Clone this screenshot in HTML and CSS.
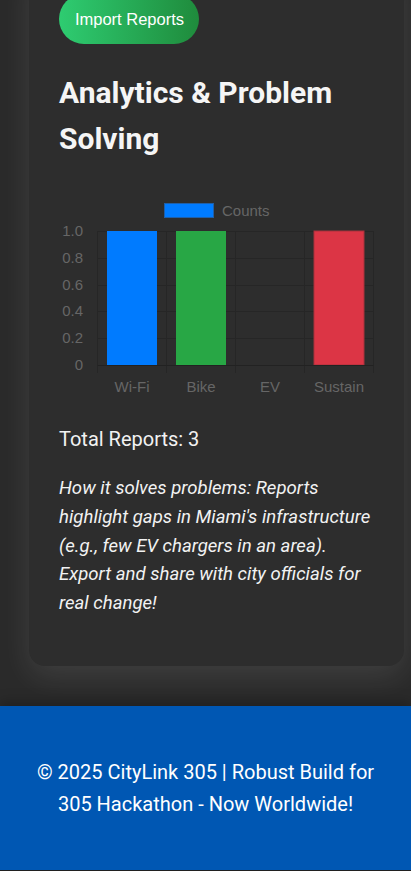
FILE: index.html
```html
<!DOCTYPE html>
<html lang="en">
<head>
<meta charset="utf-8">
<title>CityLink 305</title>
<link rel="stylesheet" href="styles.css">
</head>
<body>
<main class="page">
  <section class="card">
    <button class="btn-import">Import Reports</button>
    <h2 class="title">Analytics &amp; Problem Solving</h2>
    <svg class="chart" width="315" height="212" viewBox="0 0 315 212">
      <g class="legend">
        <rect x="105.5" y="13.5" width="49" height="14" fill="#007bff" stroke="#1f5fa8" stroke-width="1"/>
        <text x="163" y="26" class="tick">Counts</text>
      </g>
      <g class="grid" stroke="#262626" stroke-width="1">
        <line x1="38.5" y1="41.5" x2="314.5" y2="41.5"/>
        <line x1="38.5" y1="68.5" x2="314.5" y2="68.5"/>
        <line x1="38.5" y1="95.5" x2="314.5" y2="95.5"/>
        <line x1="38.5" y1="121.5" x2="314.5" y2="121.5"/>
        <line x1="38.5" y1="148.5" x2="314.5" y2="148.5"/>
        <line x1="38.5" y1="41" x2="38.5" y2="183"/>
        <line x1="107.5" y1="41" x2="107.5" y2="183"/>
        <line x1="176.5" y1="41" x2="176.5" y2="183"/>
        <line x1="245.5" y1="41" x2="245.5" y2="183"/>
        <line x1="314.5" y1="41" x2="314.5" y2="183"/>
      </g>
      <rect x="48" y="41" width="50" height="134" fill="#007bff"/>
      <rect x="117" y="41" width="50" height="134" fill="#28a745"/>
      <rect x="255" y="41" width="50" height="134" fill="#dc3545" stroke="#a8323d" stroke-width="1"/>
      <line x1="38.5" y1="175.5" x2="314.5" y2="175.5" stroke="#222" stroke-width="1"/>
      <g class="ylabels">
        <text x="24" y="46" text-anchor="end" class="tick">1.0</text>
        <text x="24" y="73" text-anchor="end" class="tick">0.8</text>
        <text x="24" y="100" text-anchor="end" class="tick">0.6</text>
        <text x="24" y="126" text-anchor="end" class="tick">0.4</text>
        <text x="24" y="153" text-anchor="end" class="tick">0.2</text>
        <text x="24" y="180" text-anchor="end" class="tick">0</text>
      </g>
      <g class="xlabels">
        <text x="73" y="202" text-anchor="middle" class="tick">Wi-Fi</text>
        <text x="142" y="202" text-anchor="middle" class="tick">Bike</text>
        <text x="211" y="202" text-anchor="middle" class="tick">EV</text>
        <text x="280" y="202" text-anchor="middle" class="tick">Sustain</text>
      </g>
    </svg>
    <p class="total">Total Reports: 3</p>
    <p class="explain">How it solves problems: Reports highlight gaps in Miami's infrastructure (e.g., few EV chargers in an area). Export and share with city officials for real change!</p>
  </section>
</main>
<footer class="footer">
  <p>© 2025 CityLink 305 | Robust Build for 305 Hackathon - Now Worldwide!</p>
</footer>
</body>
</html>
```
FILE: styles.css
```css
html, body {
  margin: 0;
  padding: 0;
}
body {
  color: #f2f2f2;
  font-family: Roboto, "Liberation Sans", Arial, sans-serif;
  line-height: 1.6;
  padding-bottom: 2px;
  background-color: #222;
}
.page {
  background: #2a2a2a;
  padding: 0 7px 40px 29px;
  overflow: hidden;
}
.card {
  margin-top: -36px;
  background: #2d2d2d;
  border-radius: 16px;
  padding: 30px 30px 30px 30px;
  box-shadow: 0 10px 30px rgba(255, 255, 255, 0.1);
}
.btn-import {
  display: block;
  height: 50px;
  width: 140px;
  border: none;
  border-radius: 25px;
  background: linear-gradient(90deg, #2ecc71, #1f8b3c);
  color: #fff;
  font-family: "Liberation Sans", Arial, sans-serif;
  font-size: 16.5px;
  padding: 0 0 0 1px;
  cursor: pointer;
}
.title {
  margin: 26px 0 28px;
  font-size: 30px;
  font-weight: 700;
  line-height: 46px;
  color: #f5f5f5;
}
.chart {
  display: block;
}
.tick {
  font-family: "Liberation Sans", Arial, sans-serif;
  font-size: 15px;
  fill: #666;
}
.total {
  margin: 21px 0 0;
  font-size: 20px;
  line-height: 32px;
}
.explain {
  margin: 19px 0 18px;
  font-size: 18.6px;
  font-style: italic;
  line-height: 28.8px;
}
.footer {
  position: relative;
  background: #0057b3;
  color: #fff;
  text-align: center;
  padding: 50px 30px;
  box-shadow: 0 -4px 12px rgba(0, 0, 0, 0.25);
}
.footer p {
  margin: 0;
  font-size: 20px;
  line-height: 32px;
}
```
